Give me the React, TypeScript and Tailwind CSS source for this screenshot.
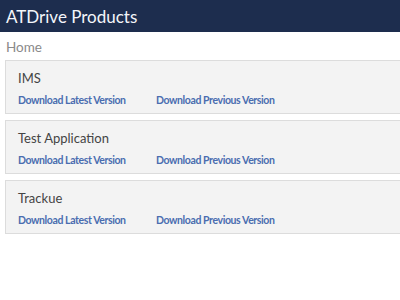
const products = ["IMS", "Test Application", "Trackue"];

export default function App() {
  return (
    <div className="min-h-[300px] bg-white" style={{ fontFamily: 'Lato, "Open Sans", sans-serif' }}>
      <div className="h-8 bg-[#1d2d4e] px-[6px] flex items-center">
        <h1 className="text-[17px] text-[#f4f6fa] leading-none">ATDrive Products</h1>
      </div>
      <div className="px-[6px] pt-[5px] h-[28px] text-[13.5px] leading-5 text-[#8a8a8a]">Home</div>
      <div className="pl-[5px] flex flex-col gap-[6px]">
        {products.map((name) => (
          <div key={name} className="h-[54px] border border-r-0 border-[#dcdcdc] bg-[#f3f3f3] pl-[12px] pt-[7px]">
            <div className="text-[13px] text-[#444] leading-5">{name}</div>
            <div className="flex mt-[5px] text-[10.5px] font-bold tracking-[-0.4px] text-[#4a6db0]">
              <a href="#" className="w-[138px]">Download Latest Version</a>
              <a href="#">Download Previous Version</a>
            </div>
          </div>
        ))}
      </div>
    </div>
  );
}
